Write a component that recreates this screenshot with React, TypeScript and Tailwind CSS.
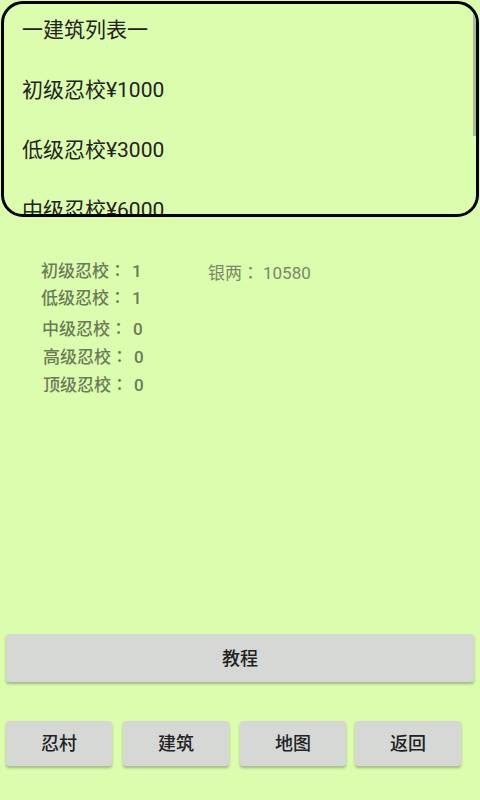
const FONT = '"Roboto", "Noto Sans CJK SC", sans-serif'

const buildings = ['一建筑列表一', '初级忍校¥1000', '低级忍校¥3000', '中级忍校¥6000', '高级忍校¥10000']

const stats = [
  { name: '初级忍校', value: '1', top: 'mt-0', left: 'pl-[41px]' },
  { name: '低级忍校', value: '1', top: 'mt-[7px]', left: 'pl-[41px]' },
  { name: '中级忍校', value: '0', top: 'mt-[11px]', left: 'pl-[42px]' },
  { name: '高级忍校', value: '0', top: 'mt-[8px]', left: 'pl-[43px]' },
  { name: '顶级忍校', value: '0', top: 'mt-[8px]', left: 'pl-[43px]' },
]

const navButtons = ['忍村', '建筑', '地图', '返回']

// centred full-width colon, as the device font draws it
function Colon({ gap }: { gap: string }) {
  return (
    <span className={`${gap} leading-none`} style={{ fontFamily: '"Noto Sans CJK TC", sans-serif' }}>
      ：
    </span>
  )
}

function Button({ label, className }: { label: string; className: string }) {
  return (
    <button
      className={`flex items-center justify-center rounded-[3px] bg-[#d6d8d5] text-[18px] font-medium text-[#222] shadow-[0_2px_3px_rgba(0,0,0,0.28)] ${className}`}
    >
      {label}
    </button>
  )
}

export default function App() {
  return (
    <div
      className="flex h-[800px] w-[480px] flex-col overflow-hidden bg-[#dcfdae]"
      style={{ fontFamily: FONT }}
    >
      {/* Building list */}
      <div className="relative mx-[1px] mt-[1px] h-[216px] overflow-hidden rounded-[22px] border-[3px] border-black">
        <div className="flex flex-col gap-[36px] pl-[18px] pt-[14px] text-[21px] leading-[24px] text-[#222]">
          {buildings.map((b) => (
            <div key={b}>{b}</div>
          ))}
        </div>
        <div className="absolute right-0 top-0 h-[132px] w-[3px] bg-[#a9bb8f]" />
      </div>

      {/* Stats */}
      <div className="mt-[44px] flex text-[17px] leading-[20px]">
        <div className="flex w-[208px] flex-col font-medium text-[#6b7b58]">
          {stats.map((s) => (
            <div key={s.name} className={`h-[20px] ${s.top} ${s.left}`}>
              {s.name}
              <Colon gap="mr-[6px]" />
              {s.value}
            </div>
          ))}
        </div>
        <div className="mt-[2px] h-[20px] text-[#7a8866]">
          银两<Colon gap="mr-[4px]" />10580
        </div>
      </div>

      <div className="flex-1" />

      <Button label="教程" className="mx-[6px] h-[48px]" />

      <div className="mb-[34px] mt-[39px] flex gap-[11px] pl-[6px]">
        {navButtons.map((n, i) => (
          <Button key={n} label={n} className={`h-[45px] w-[106px] ${i === 3 ? '-ml-[2px]' : ''}`} />
        ))}
      </div>
    </div>
  )
}
